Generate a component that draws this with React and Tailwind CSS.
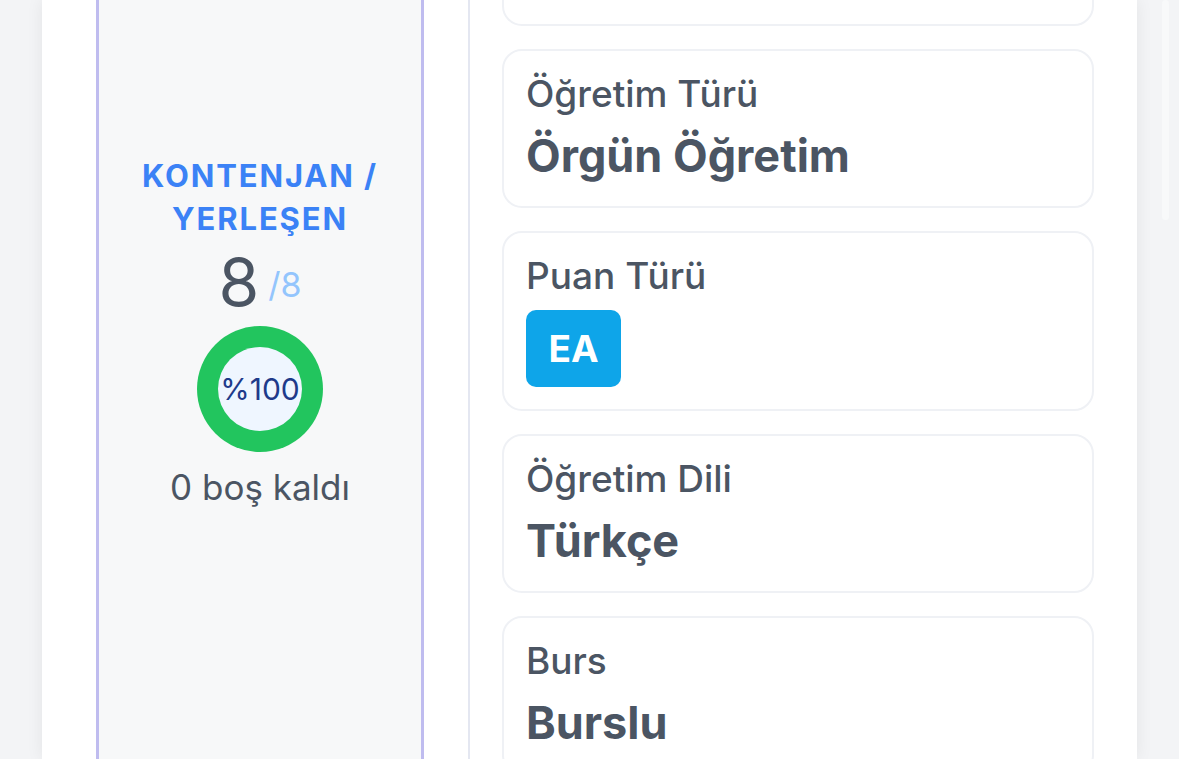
export default function App() {
  const fields = [
    { label: "Öğretim Türü", value: "Örgün Öğretim" },
    { label: "Puan Türü", badge: "EA" },
    { label: "Öğretim Dili", value: "Türkçe" },
    { label: "Burs", value: "Burslu" },
  ];

  return (
    <main
      className="relative h-[759px] overflow-hidden bg-[#f3f4f6] px-[42px]"
      style={{ fontFamily: "Inter, 'Noto Sans', sans-serif" }}
    >
      <div className="absolute right-[10px] top-0 h-[220px] w-[7px] rounded-full bg-[#f8f9fa]" />
      <div className="flex h-full bg-white pl-[54px] pr-[43px] shadow-[0_0_16px_rgba(0,0,0,0.07)]">
        {/* kontenjan paneli */}
        <section className="flex w-[328px] shrink-0 flex-col items-center border-x-[3px] border-[#bfbcef] bg-[#f7f8f9] pt-[154px]">
          <h2 className="text-center text-[31px] font-bold leading-[43px] tracking-[0.06em] text-[#3b82f6]">
            KONTENJAN /
            <br />
            YERLEŞEN
          </h2>
          <div className="mt-[4px] flex items-center gap-[9px]">
            <span className="text-[66px] leading-[76px] text-[#4b5563]">8</span>
            <span className="mt-[6px] text-[34px] leading-[40px] text-[#93c5fd]">/8</span>
          </div>
          <div className="mt-[6px] flex h-[126px] w-[126px] items-center justify-center rounded-full bg-[#22c55e]">
            <div className="flex h-[84px] w-[84px] items-center justify-center rounded-full bg-[#eff6ff]">
              <span className="text-[30px] text-[#1e3a8a]">%100</span>
            </div>
          </div>
          <p className="mt-[14px] text-[35px] leading-[42px] text-[#4b5563]">0 boş kaldı</p>
        </section>

        {/* bilgi kartları */}
        <section className="ml-[44px] flex flex-1 flex-col gap-[23px] border-l-2 border-[#e4e7f1] pl-8">
          <div className="-mt-[132px] h-[158px] shrink-0 rounded-[20px] border-2 border-[#eff1f5]" />
          {fields.map((f) => (
            <div
              key={f.label}
              className="shrink-0 rounded-[20px] border-2 border-[#eff1f5] px-[22px] pb-[22px] pt-[21px]"
            >
              <p className="text-[37px] font-medium leading-[44px] text-[#4b5563]">{f.label}</p>
              {f.badge ? (
                <span className="mt-[12px] inline-flex h-[77px] w-[95px] items-center justify-center rounded-[10px] bg-[#0ea5e9] text-[37px] font-bold text-white">
                  {f.badge}
                </span>
              ) : (
                <p className="mt-[12px] text-[45px] font-bold leading-[56px] text-[#4b5563]">{f.value}</p>
              )}
            </div>
          ))}
        </section>
      </div>
    </main>
  );
}
